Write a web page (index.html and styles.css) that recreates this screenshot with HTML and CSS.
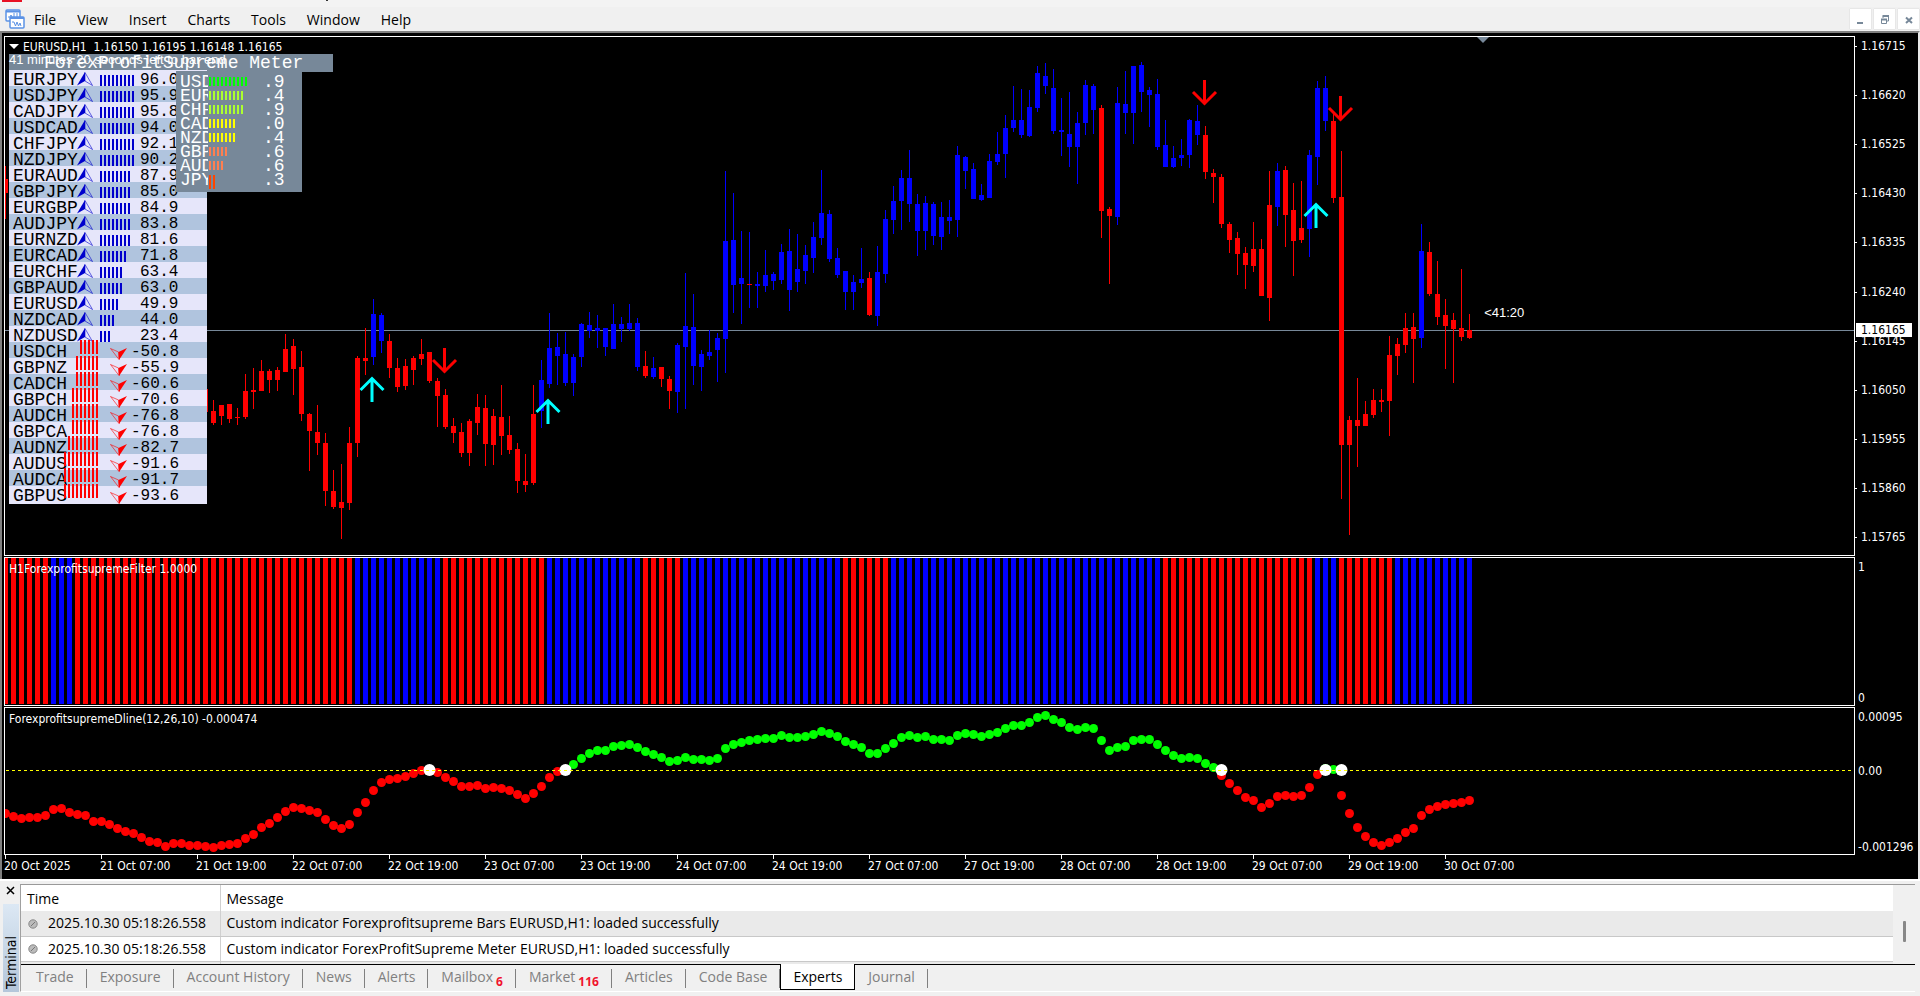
FILE: index.html
```html
<!DOCTYPE html>
<html lang="en">
<head>
<meta charset="utf-8">
<title>EURUSD,H1</title>
<link rel="stylesheet" href="styles.css">
</head>
<body>
<div class="titlebar"><i class="titlebar-logo"></i><i class="titlebar-mark"></i></div>

<header class="menubar">
  <svg class="app-icon" width="20" height="20" viewBox="0 0 20 20" fill="none" stroke="#5b92e5" stroke-width="1.5">
    <rect x="1" y="1" width="14" height="11" rx="1" fill="#fff"/>
    <path d="M1 2.5h14" stroke-width="2"/>
    <path d="M3 8h2l1-2 1 2M9 4v5M12 4v4" stroke-width="1"/>
    <rect x="5" y="8" width="14" height="11" rx="1" fill="#fff"/>
    <path d="M5 9h14" stroke-width="2"/>
    <path d="M7 13h2l1.500 4 1.500-4 1.500 4 1.500-3 1 3" stroke-width="1"/>
  </svg>
  <nav class="menus">
    <button>File</button><button>View</button><button>Insert</button><button>Charts</button><button>Tools</button><button>Window</button><button>Help</button>
  </nav>
  <div class="window-buttons">
    <button aria-label="Minimize"><svg width="21" height="20" viewBox="0 0 21 20"><path d="M7 14h6" stroke="#778899" stroke-width="2"/></svg></button>
    <button aria-label="Restore"><svg width="21" height="20" viewBox="0 0 21 20" fill="none" stroke="#778899"><path d="M9 9V7.500h5.500V12H13"/><path d="M8.500 7h6.500" stroke-width="2"/><path d="M7.500 10.500h5v4h-5z"/><path d="M7 10.500h6" stroke-width="2"/></svg></button>
    <button aria-label="Close"><svg width="21" height="20" viewBox="0 0 21 20"><path d="M8 8.500l6 5.500M14 8.500l-6 5.500" stroke="#778899" stroke-width="2"/></svg></button>
  </div>
</header>

<main class="chart">
  <section class="pane">
    <svg id="price" class="plot" viewBox="5 37 1849 518" preserveAspectRatio="none"></svg>
    <span class="bar-clock">&lt;41:20</span>
    <div class="meter">
      <div class="meter-title">ForexProfitSupreme Meter</div>
      <div id="pairs" class="pairs"></div>
      <div id="currencies" class="currencies"></div>
    </div>
    <span class="countdown">41 minutes 20 seconds left to bar end</span>
    <h1 class="pane-title symbol"><svg width="10" height="6" viewBox="0 0 10 6"><path d="M0 0h10L5 5z" fill="#fff"/></svg>EURUSD,H1&nbsp; 1.16150 1.16195 1.16148 1.16165</h1>
  </section>
  <div id="price-axis" class="axis"></div>

  <section class="pane">
    <svg id="filter" class="plot" viewBox="5 558 1849 147" preserveAspectRatio="none"></svg>
    <h2 class="pane-title">H1ForexprofitsupremeFilter 1.0000</h2>
  </section>
  <div class="axis ends"><span>1</span><span>0</span></div>

  <section class="pane">
    <svg id="dline" class="plot" viewBox="5 708 1849 146" preserveAspectRatio="none"></svg>
    <h2 class="pane-title">ForexprofitsupremeDline(12,26,10) -0.000474</h2>
  </section>
  <div class="axis ends"><span>0.00095</span><span class="zero">0.00</span><span>-0.001296</span></div>

  <div id="time-axis" class="time-axis"></div>
</main>

<section class="terminal">
  <aside class="terminal-side">
    <button aria-label="Close terminal"><svg width="9" height="9" viewBox="0 0 9 9"><path d="M1 1l7 7M8 1L1 8" stroke="#000" stroke-width="1.500"/></svg></button>
    <span class="terminal-label">Terminal</span>
  </aside>
  <div class="terminal-main">
    <div class="log">
      <table>
        <thead><tr><th>Time</th><th>Message</th></tr></thead>
        <tbody>
          <tr><td><svg class="dot" width="10" height="10" viewBox="0 0 10 10"><circle cx="5" cy="5" r="4.200" fill="#bbb" stroke="#888"/><path d="M3 7l4-4" stroke="#777"/></svg>2025.10.30 05:18:26.558</td><td>Custom indicator Forexprofitsupreme Bars EURUSD,H1: loaded successfully</td></tr>
          <tr><td><svg class="dot" width="10" height="10" viewBox="0 0 10 10"><circle cx="5" cy="5" r="4.200" fill="#bbb" stroke="#888"/><path d="M3 7l4-4" stroke="#777"/></svg>2025.10.30 05:18:26.558</td><td>Custom indicator ForexProfitSupreme Meter EURUSD,H1: loaded successfully</td></tr>
          <tr><td></td><td></td></tr>
        </tbody>
      </table>
      <div class="scroll"><i></i></div>
    </div>
    <nav class="tabs">
      <button>Trade</button><button>Exposure</button><button>Account History</button><button>News</button><button>Alerts</button><button>Mailbox<sub>6</sub></button><button>Market<sub>116</sub></button><button>Articles</button><button>Code Base</button><button class="active">Experts</button><button>Journal</button>
    </nav>
  </div>
</section>
<script>
const STEP = 8;
const FIRST_X = 5;
const xOf = i => FIRST_X + STEP * i;
const byId = id => document.getElementById(id);
const RED = '#ff0000', BLUE = '#0000ff', GREEN = '#00ff00';

// Candles: colour (m = blue wick, red body), then high, body top, body bottom, low. Starts at bar 25.
const candles = `
r389,389,412,413 r400,411,423,425 r405,405,416,425 r404,404,419,423 r408,417,418,425 r374,391,417,419 r368,390,392,409
r360,371,391,391 r369,371,380,393 r367,370,380,391 r334,349,372,372 r339,346,369,395 r351,367,414,421
r413,414,431,471 r405,432,443,455 r433,443,491,506 r470,491,507,509 r464,502,508,539 r427,443,503,510
r356,358,443,457 r328,358,361,375 b299,314,357,365 b313,315,341,353 r334,341,368,378 r358,368,387,392
r359,366,386,390 r356,358,370,385 r339,354,359,365 r352,352,381,383 r378,381,396,427 r389,395,427,429
r418,426,433,443 r423,432,453,457 r419,421,453,466 r394,407,423,435 r395,408,444,466 r409,416,445,465
r385,417,436,455 r416,435,450,454 r443,449,481,493 r454,481,485,492 r385,414,483,485 b360,380,411,428
b313,348,384,388 b333,347,356,385 b332,354,383,386 b354,357,383,396 b323,324,357,367 b312,325,331,338
b315,328,331,348 b328,328,347,356 b304,324,349,349 b317,324,329,342 b304,323,329,331 b318,323,367,371
r351,366,376,378 b357,368,377,379 r367,367,379,387 r376,379,391,409 b343,345,392,413 b273,326,347,409
b294,327,366,385 b350,354,367,391 b330,352,356,360 b333,338,350,382 b171,241,339,373 b193,240,285,313
b231,278,284,324 m232,284,285,308 b272,284,286,308 b250,275,286,292 b272,274,281,290 b244,252,280,284
b229,251,290,311 b234,269,282,292 b245,255,271,284 b222,237,258,273 b170,213,238,245 b210,214,259,262
b248,258,275,278 b271,271,292,310 b275,282,292,310 b248,279,283,288 r272,278,315,316 b246,272,316,326
b210,219,274,283 b186,201,220,234 b170,178,201,230 b150,178,204,222 b194,204,231,256 b196,203,231,250
b202,204,236,245 b202,217,237,250 b200,217,221,234 b146,155,220,237 b156,157,171,189 b163,169,199,199
b184,195,200,201 b154,161,198,198 b132,154,162,165 b115,128,154,178 b86,120,128,132 b89,120,135,138
b90,107,136,137 b66,73,108,112 b63,76,86,94 b69,88,131,134 b98,130,132,156 b92,134,147,167
b112,123,147,184 b80,85,123,135 b84,86,110,134 r105,108,211,238 r207,209,216,284 b87,103,217,225
b71,104,113,134 b66,66,113,144 b62,65,92,112 b87,90,95,127 b79,94,147,150 b120,145,167,167
b146,158,167,168 b139,155,158,166 b119,120,155,168 b105,121,135,145 r126,135,172,179 r169,173,177,203
r174,177,224,228 r222,224,240,253 r232,238,254,275 r247,253,265,289 r222,249,266,272 r239,249,296,296
r171,205,298,321 b163,171,207,226 r166,170,215,247 r183,210,241,276 r181,228,240,243 b150,155,229,257
b81,88,157,185 b76,88,121,131 r113,121,198,203 r151,197,445,499 r416,420,445,535 r378,420,426,467
r401,414,426,426 r389,400,415,418 r389,400,402,412 r336,355,401,436 r338,344,356,375 r313,328,345,353
r313,327,339,383 b224,251,338,348 r242,252,294,296 r261,294,317,325 r299,315,326,369 r313,320,329,383
r269,328,337,341 r314,330,338,339`.trim().split(/\s+/);

function candle(i, text) {
  const [high, top, bottom, low] = text.slice(1).split(',').map(Number);
  const x = xOf(i);
  const wick = text[0] === 'r' ? RED : BLUE;
  const body = text[0] === 'b' ? BLUE : RED;
  return `<rect x="${x}" y="${high}" width="1" height="${low - high}" fill="${wick}"/>` +
    `<rect x="${x - 2}" y="${top}" width="5" height="${Math.max(1, bottom - top)}" fill="${body}"/>`;
}
const arrow = (x, y, up) => up
  ? `<path d="M${x} ${y + 26}V${y + 3}M${x - 11.5} ${y + 14}L${x} ${y + 2.5}L${x + 11.5} ${y + 14}" stroke="#00ffff" stroke-width="3" fill="none"/>`
  : `<path d="M${x} ${y}V${y + 23}M${x - 11.5} ${y + 12}L${x} ${y + 23.5}L${x + 11.5} ${y + 12}" stroke="#ff0000" stroke-width="3" fill="none"/>`;

byId('price').innerHTML =
  '<rect x="5" y="330" width="1849" height="1" fill="#778899"/><g shape-rendering="crispEdges">' +
  candle(0, 'r166,179,193,219') +
  candles.map((text, i) => candle(i + 25, text)).join('') + '</g>' +
  arrow(372, 376, true) + arrow(548, 398, true) + arrow(1316, 202, true) +
  arrow(444.5, 348) + arrow(1204.5, 80) + arrow(1340.5, 96) +
  '<path d="M1477 37h12l-6 6z" fill="#778899"/>';

// Last bar of each run in the filter histogram; runs alternate red and blue.
const runs = [5, 8, 43, 54, 67, 79, 84, 104, 110, 144, 163, 166, 173, 183];
let bars = '';
for (let i = 0, run = 0; i <= 183; i++) {
  if (i > runs[run]) run++;
  bars += `<rect x="${xOf(i) - 2}" y="558" width="5" height="146" fill="${run % 2 ? BLUE : RED}"/>`;
}
byId('filter').innerHTML = `<g shape-rendering="crispEdges">${bars}</g>`;

// Dline values, three units to a pixel below y = 700.
const line = [338,349,355,352,352,346,328,325,337,343,346,364,364,373,385,394,400,412,424,427,
  439,430,430,436,436,439,442,436,433,430,415,403,382,370,352,334,322,325,331,337,
  358,376,385,373,337,307,271,247,238,235,229,220,211,211,217,232,244,259,259,256,
  265,262,265,271,283,295,280,259,232,214,208,193,175,160,151,149,139,136,133,142,
  154,163,172,184,181,172,178,178,181,175,145,133,127,121,118,115,115,106,112,112,
  109,103,94,100,109,124,133,142,160,160,145,130,112,106,112,109,118,118,121,106,
  100,103,109,103,97,85,76,76,67,52,46,58,67,82,88,82,85,121,151,142,
  139,121,118,118,133,151,166,175,172,175,190,202,226,250,271,292,301,322,310,289,
  286,289,286,262,223,203,208,286,340,382,409,427,436,427,415,397,385,346,328,319,
  313,310,307,301];
const isGreen = i => (i > 70 && i < 152) || i === 165 || i === 166;
const dot = (i, y, r, fill) => `<circle cx="${xOf(i) + 0.5}" cy="${y}" r="${r}" fill="${fill}"/>`;
byId('dline').innerHTML =
  line.map((v, i) => dot(i, 700.5 + Math.round(v / 3), 4.5, isGreen(i) ? GREEN : RED)).join('') +
  [53, 70, 152, 165, 167].map(i => dot(i, 770, 6, '#fff')).join('') +
  '<path d="M6 770.5H1854" stroke="#ffff00" stroke-dasharray="3 3"/>';

// Axes
const pct = (v, start, size) => `${(v - start) / size * 100}%`;
const prices = ['1.16715', '1.16620', '1.16525', '1.16430', '1.16335', '1.16240', '1.16145', '1.16050', '1.15955', '1.15860', '1.15765'];
byId('price-axis').innerHTML =
  prices.map((p, i) => `<div class="tick" style="top:${pct(Math.round(46 + i * 49.1), 36, 520)}"><span>${p}</span></div>`).join('') +
  `<div class="price-tag" style="top:${pct(330, 36, 520)}"><span>1.16165</span></div>`;

const times = ['20 Oct 2025', '21 Oct 07:00', '21 Oct 19:00', '22 Oct 07:00', '22 Oct 19:00', '23 Oct 07:00', '23 Oct 19:00',
  '24 Oct 07:00', '24 Oct 19:00', '27 Oct 07:00', '27 Oct 19:00', '28 Oct 07:00', '28 Oct 19:00', '29 Oct 07:00', '29 Oct 19:00', '30 Oct 07:00'];
byId('time-axis').innerHTML = times.map((t, i) => `<span style="left:${pct(i * 96, 0, 1851)}">${t}</span>`).join('');

// Strength meter
const repeat = n => '<i></i>'.repeat(n);
const pairs = [['EURJPY', '96.0', 9], ['USDJPY', '95.9', 9], ['CADJPY', '95.8', 9], ['USDCAD', '94.0', 9], ['CHFJPY', '92.1', 9],
  ['NZDJPY', '90.2', 9], ['EURAUD', '87.9', 8], ['GBPJPY', '85.0', 8], ['EURGBP', '84.9', 8], ['AUDJPY', '83.8', 8],
  ['EURNZD', '81.6', 8], ['EURCAD', '71.8', 7], ['EURCHF', '63.4', 6], ['GBPAUD', '63.0', 6], ['EURUSD', '49.9', 5],
  ['NZDCAD', '44.0', 4], ['NZDUSD', '23.4', 3], ['USDCH', '-50.8', 5], ['GBPNZ', '-55.9', 6], ['CADCH', '-60.6', 6],
  ['GBPCH', '-70.6', 7], ['AUDCH', '-76.8', 7], ['GBPCA', '-76.8', 7], ['AUDNZ', '-82.7', 8], ['AUDUS', '-91.6', 9],
  ['AUDCA', '-91.7', 9], ['GBPUS', '-93.6', 9]];
const upIcon = '<svg class="pair-up" width="16" height="14" viewBox="0 0 16 14"><path d="M8 0L0 13.500 8 9z" fill="#0000cd"/><path d="M8 .5l7.500 13L8 9z" fill="none" stroke="#0000cd" stroke-width=".6"/></svg>';
const downIcon = '<svg class="pair-down" width="17" height="12" viewBox="0 0 17 12"><path d="M17 0L9 12 8.500 4z" fill="#f00"/><path d="M.5.5L9 11.500 8.500 4z" fill="none" stroke="#f00" stroke-width=".6"/></svg>';
byId('pairs').innerHTML = pairs.map(([name, value, n]) => value[0] === '-'
  ? `<div class="pair down"><span class="pair-name">${name}</span><span class="bars">${repeat(n)}</span>${downIcon}<span class="pair-value">${value}</span></div>`
  : `<div class="pair"><span class="pair-name">${name}</span>${upIcon}<span class="bars">${repeat(n)}</span><span class="pair-value">${value}</span></div>`).join('');

const currencies = [['USD', '.9', 10, '#00ff00'], ['EUR', '.4', 9, '#adff2f'], ['CHF', '.9', 9, '#adff2f'], ['CAD', '.0', 7, '#ffff00'],
  ['NZD', '.4', 7, '#ffff00'], ['GBP', '.6', 5, '#ff7f50'], ['AUD', '.6', 4, '#ff7f50'], ['JPY', '.3', 2, '#ff4500']];
byId('currencies').innerHTML = currencies.map(([name, value, n, color]) =>
  `<div class="currency"><span class="currency-name">${name}</span><span class="bars" style="color:${color}">${repeat(n)}</span><span>${value}</span></div>`).join('');
</script>
</body>
</html>
```
FILE: styles.css
```css
* { box-sizing: border-box; }
body {
  margin: 0;
  height: 100vh;
  display: flex;
  flex-direction: column;
  background: #f0f0f0;
  font-family: "Open Sans", "Noto Sans", sans-serif;
  font-size: 14px;
  color: #000;
  overflow: hidden;
}
button {
  border: 0;
  margin: 0;
  padding: 0;
  background: none;
  font: inherit;
  color: inherit;
}
svg { display: block; flex: none; }

.titlebar { height: 7px; background: #f3f3f3; display: flex; padding-left: 2px; }
.titlebar-logo { width: 20px; height: 2px; background: #e81123; }
.titlebar-mark { width: 2px; height: 1px; margin-left: 304px; background: #333; }

.menubar { height: 24px; display: flex; align-items: center; padding: 0 1px 0 5px; }
.menus { display: flex; flex: 1; padding-left: 9px; gap: 21px; }
.window-buttons { display: flex; gap: 3px; }
.window-buttons button { background: #fff; box-shadow: 0 0 1px #bbb; }

.chart {
  flex: 1;
  min-height: 0;
  display: grid;
  grid-template-columns: minmax(0, 1fr) 63px;
  grid-template-rows: minmax(0, 1fr) 149px 148px 23px;
  row-gap: 1px;
  padding: 3px 0 0 2px;
  background: #000;
  border: solid #808080;
  border-width: 2px 0 0 2px;
  border-right: 2px solid #e8e8e8;
  font-family: "DejaVu Sans Condensed", "DejaVu Sans", sans-serif;
  font-size: 12px;
  line-height: 14px;
  color: #fff;
}
.pane { position: relative; border: 1px solid #fff; min-height: 0; }
.plot { width: 100%; height: 100%; }
.pane-title { position: absolute; left: 4px; top: 4px; margin: 0; font: inherit; white-space: nowrap; }
.symbol { display: flex; align-items: center; gap: 4px; top: 3px; }
.countdown, .bar-clock {
  position: absolute;
  left: 4px;
  top: 16px;
  font-family: "Liberation Sans", Arial, sans-serif;
  font-size: 13px;
  white-space: nowrap;
}
.bar-clock { left: 80%; top: 52%; }

.axis { position: relative; }
.axis span { padding-left: 4px; white-space: nowrap; }
.tick { position: absolute; left: 0; display: flex; align-items: center; transform: translateY(-50%); }
.tick::before { content: ""; width: 2px; height: 1px; background: #fff; }
.price-tag {
  position: absolute;
  left: 1px;
  width: 56px;
  padding-left: 1px;
  background: #fff;
  color: #000;
  transform: translateY(-50%);
}
.ends { display: flex; flex-direction: column; justify-content: space-between; padding: 3px 0 1px; }
.axis.ends span { padding-left: 3px; }
.ends .zero { padding-bottom: 22px; }

.time-axis { position: relative; grid-column: 1 / -1; margin: -1px 63px 0 0; }
.time-axis span { position: absolute; top: 0; white-space: nowrap; }
.time-axis span::before { content: ""; display: block; width: 1px; height: 4px; margin-left: 1px; background: #fff; }

.meter {
  position: absolute;
  left: 4px;
  top: 17px;
  font-family: "Liberation Mono", "Courier New", monospace;
  font-size: 18px;
}
.meter-title { width: 324px; height: 18px; line-height: 18px; padding-left: 35px; background: #778899; }
.pairs { position: absolute; top: 16px; left: 0; width: 198px; color: #000; }
.pair { display: flex; height: 16px; line-height: 20px; padding-left: 4px; background: #e6e6fa; }
.pair:nth-child(even) { background: #b0c4de; }
.pair:last-child { height: 18px; }
.pair-name { width: 65px; }
.pair-up { margin: 2px 7px 0 -1px; }
.pair-value { font-size: 16px; }
.bars { display: flex; gap: 2px; }
.bars i { width: 2px; background: currentColor; }
.pair .bars { width: 40px; color: #0000cd; height: 11px; margin-top: 5px; }
.pair.down .pair-name { width: 58px; }
.pair.down .bars { width: 40px; height: 14px; margin: -2px 12px 0 -13px; justify-content: flex-end; color: #f00; }
.pair.down .pair-value { margin-left: -1px; }
.pair-down { margin: 6px 5px -4px 0; }
.currencies { position: absolute; top: 17px; left: 167px; width: 126px; height: 121px; padding: 3px 0 0 4px; background: #778899; }
.currency { display: flex; height: 14px; line-height: 16px; }
.currency-name { width: 28px; overflow: hidden; }
.currency .bars { width: 54px; height: 9px; margin: 3px 0 0 1px; }
.currency:last-child .bars { height: 14px; }

.terminal { height: 117px; display: flex; padding: 5px 5px 4px 3px; border-top: 2px solid #fff; }
.terminal-side { width: 17px; display: flex; flex-direction: column; gap: 9px; }
.terminal-side button { padding: 0 3px; }
.terminal-label {
  flex: 1;
  writing-mode: sideways-lr;
  width: 16px;
  line-height: 16px;
  padding-bottom: 3px;
  font-family: "DejaVu Sans Condensed", sans-serif;
  font-size: 14px;
  background: linear-gradient(#dce8f4, #b4c6da);
}
.terminal-main { flex: 1; min-width: 0; border-left: 1px solid #a0a0a0; border-top: 1px solid #999; border-bottom: 1px solid #fff; margin-top: -2px; }
.log { height: 80px; display: flex; align-items: flex-start; background: #fff; border-bottom: 1px solid #000; overflow: hidden; }
table { flex: 1; width: 100%; border-collapse: collapse; table-layout: fixed; }
th { text-align: left; font-weight: 400; height: 26px; padding: 0 6px; }
th:first-child, td:first-child { width: 199px; border-right: 1px solid #d0d0d0; }
td { height: 25px; padding: 0 6px; line-height: 20px; border-bottom: 1px solid #c8c8c8; white-space: nowrap; }
tbody tr:nth-child(odd) { background: #eaeaea; }
.dot { display: inline-block; margin: 0 10px 1px 1px; vertical-align: middle; }
.scroll { width: 22px; height: 80px; background: #f0f0f0; padding: 36px 0 0 10px; }
.scroll i { display: block; width: 3px; height: 21px; border-radius: 1px; background: #888; }
.tabs { display: flex; color: #808080; line-height: 20px; height: 26px; }
.tabs button { position: relative; padding: 2px 13px; height: 24px; }
.tabs button:first-child { padding-left: 15px; }
.tabs button::after { content: ""; position: absolute; right: 0; top: 4px; height: 19px; width: 1px; background: #808080; }
.tabs .active { background: #fff; color: #000; border: solid #000; border-width: 0 1px 1px; margin-top: -1px; height: 26px; padding: 3px 12px 2px; }
.tabs .active::after { display: none; }
sub { margin-left: 3px; font-size: 12px; font-weight: 700; line-height: 12px; color: #f0142d; }
```
